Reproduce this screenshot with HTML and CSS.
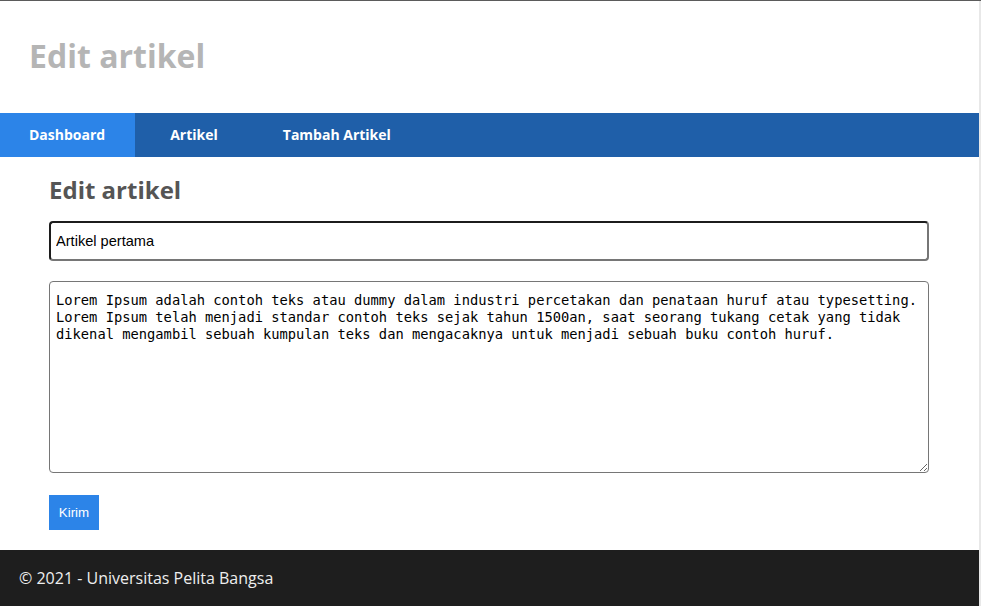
FILE: index.html
```html
<!DOCTYPE html>
<html lang="id">
<head>
<meta charset="utf-8">
<title>Edit artikel</title>
<link rel="stylesheet" href="styles.css">
</head>
<body>
<div class="page">
  <header class="site-header">
    <h1 class="site-title">Edit artikel</h1>
  </header>
  <nav class="site-nav">
    <a class="nav-link active" href="#">Dashboard</a>
    <a class="nav-link" href="#">Artikel</a>
    <a class="nav-link" href="#">Tambah Artikel</a>
  </nav>
  <main class="content">
    <h2 class="page-title">Edit artikel</h2>
    <form class="edit-form">
      <input class="field-title" type="text" value="Artikel pertama">
      <textarea class="field-body">Lorem Ipsum adalah contoh teks atau dummy dalam industri percetakan dan penataan huruf atau typesetting. Lorem Ipsum telah menjadi standar contoh teks sejak tahun 1500an, saat seorang tukang cetak yang tidak dikenal mengambil sebuah kumpulan teks dan mengacaknya untuk menjadi sebuah buku contoh huruf.</textarea>
      <button class="btn-submit" type="button">Kirim</button>
    </form>
  </main>
  <footer class="site-footer">© 2021 - Universitas Pelita Bangsa</footer>
</div>
<div class="edge"></div>
</body>
</html>
```
FILE: styles.css
```css
html, body {
  margin: 0;
  padding: 0;
}
body {
  border-top: 1px solid #5b5b5b;
  display: flex;
  font-family: "Open Sans", "Liberation Sans", sans-serif;
  background: #ffffff;
  overflow: hidden;
}
.page {
  width: 979px;
  flex: none;
  display: flex;
  flex-direction: column;
}
.edge {
  flex: 1;
  background: #e8e8e8;
}
.site-header {
  padding: 33px 30px 35px 29px;
}
.site-title {
  margin: 0;
  font-size: 32px;
  line-height: 44px;
  font-weight: 700;
  color: #b5b5b5;
}
.site-nav {
  display: flex;
  gap: 6px;
  height: 44px;
  background: #1f5fa9;
}
.nav-link {
  display: block;
  padding: 0 30px 0 29px;
  line-height: 44px;
  font-size: 14px;
  font-weight: 700;
  color: #ffffff;
  text-decoration: none;
}
.nav-link.active {
  background: #2c84e8;
}
.content {
  padding: 16px 50px 20px 49px;
}
.page-title {
  margin: 0 0 15px;
  font-size: 24px;
  line-height: 33px;
  font-weight: 700;
  color: #555555;
}
.edit-form {
  display: flex;
  flex-direction: column;
  align-items: flex-start;
}
.field-title {
  box-sizing: border-box;
  width: 880px;
  height: 40px;
  margin: 0 0 20px;
  padding: 0 5px;
  border-style: solid;
  border-width: 2px;
  border-color: #1c1c1c #767676 #767676 #1c1c1c;
  border-radius: 4px;
  font-family: "Liberation Sans", Arial, sans-serif;
  font-size: 14.6px;
  color: #000000;
  background: #ffffff;
  outline: none;
}
.field-body {
  display: block;
  box-sizing: border-box;
  width: 880px;
  height: 192px;
  margin: 0 0 22px;
  padding: 10px 2px 6px 6px;
  border: 1px solid #767676;
  border-radius: 4px;
  font-family: "DejaVu Sans Mono", "Liberation Mono", monospace;
  font-size: 13.75px;
  line-height: 17px;
  color: #000000;
  background: #ffffff;
  outline: none;
}
.btn-submit {
  width: 50px;
  height: 35px;
  padding: 0;
  border: none;
  background: #2c84e8;
  color: #ffffff;
  font-family: "Liberation Sans", Arial, sans-serif;
  font-size: 13.33px;
}
.site-footer {
  height: 56px;
  display: flex;
  align-items: center;
  padding-left: 19px;
  background: #1e1e1e;
  color: #eeeeee;
  font-size: 16px;
}
```
